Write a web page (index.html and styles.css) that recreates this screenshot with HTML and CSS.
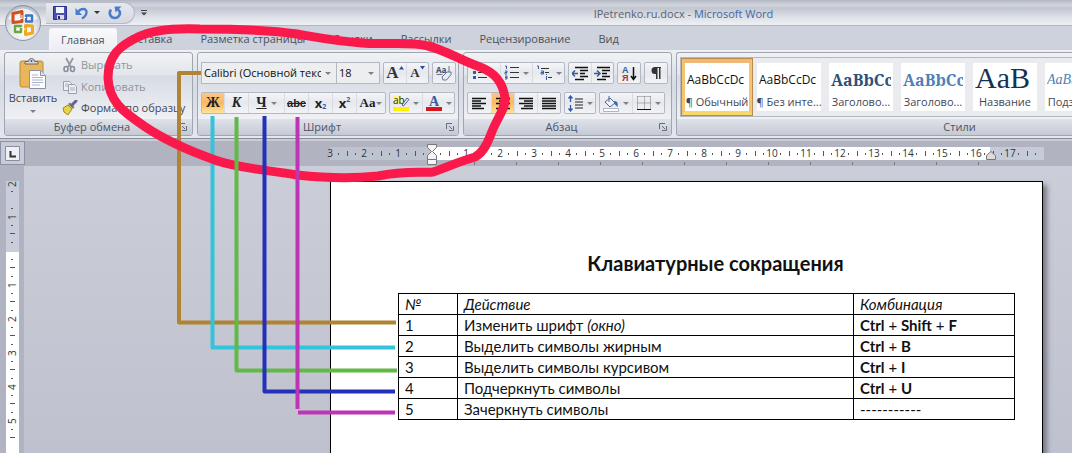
FILE: index.html
```
<!DOCTYPE html>
<html lang="ru">
<head>
<meta charset="utf-8">
<title>IPetrenko.ru.docx - Microsoft Word</title>
<link rel="stylesheet" href="styles.css">
</head>
<body>
<div class="app">
  <header class="titlebar">
    <button class="office" aria-label="Office">
      <svg width="38" height="38" viewBox="0 0 38 38">
        <defs><radialGradient id="orb" cx="50%" cy="75%" r="75%"><stop offset="0" stop-color="#fff"/><stop offset=".5" stop-color="#e3e6ec"/><stop offset="1" stop-color="#b4bac6"/></radialGradient></defs>
        <circle cx="19" cy="19" r="17.5" fill="url(#orb)" stroke="#8d939f"/>
        <path d="M4 15a16 16 0 0 1 30 0q-15 5-30 0z" fill="#fff" opacity=".7"/>
        <g fill="none" stroke-linejoin="round">
          <path d="M9 9.500l9-2v10l-9 1z" stroke="#d2501c" stroke-width="3"/>
          <path d="M22 11.500h6v6h-6z" stroke="#3b78c4" stroke-width="2.400"/>
          <path d="M11 22h6v6h-6z" stroke="#6aa83a" stroke-width="2.400"/>
          <path d="M21.500 21.500l7 .500v7l-7 1.500z" stroke="#f0a81c" stroke-width="3"/>
        </g>
        <path d="M18 11v3.500h-2M22 13.500h-2v2M16.500 23.500h2M21.500 25h-2" stroke="#fff" fill="none"/>
      </svg>
    </button>
    <div class="quick">
      <button aria-label="Сохранить"><svg width="14" height="14" viewBox="0 0 14 14"><path d="M.5.5h13v13h-13z" fill="#4a50b4" stroke="#2c3188"/><path d="M3 1h8v6H3z" fill="#f3f6ff"/><path d="M4 9h7v4.500H4z" fill="#d6daea"/><path d="M5 10h2v3H5z" fill="#23286e"/></svg></button>
      <button aria-label="Отменить"><svg width="14" height="14" viewBox="0 0 14 14"><path d="M3 6C6 2 12 2 11.500 6.500 11.300 9 9.500 11 7 12.500" fill="none" stroke="#4b7cc8" stroke-width="2.400"/><path d="M.5 2v7h6.500z" fill="#4b7cc8"/></svg><i class="arrow dark"></i></button>
      <button aria-label="Вернуть"><svg width="14" height="14" viewBox="0 0 14 14"><path d="M3 3.500C0 8 3 12 7 12s7-5 3-8.500" fill="none" stroke="#4b7cc8" stroke-width="2.600"/><path d="M6.500.500h7l-6 6z" fill="#4b7cc8"/></svg></button>
    </div>
    <button class="customize" aria-label="Настройка панели"><svg width="6" height="6" viewBox="0 0 6 6"><path d="M0 .5h6" stroke="#444"/><path d="M0 2.500h6l-3 3z" fill="#444"/></svg></button>
    <h1 class="title">IPetrenko.ru.docx - <span>Microsoft Word</span></h1>
  </header>

  <nav class="tabs">
    <button class="tab active">Главная</button>
    <button class="tab">Вставка</button>
    <button class="tab">Разметка страницы</button>
    <button class="tab">Ссылки</button>
    <button class="tab">Рассылки</button>
    <button class="tab">Рецензирование</button>
    <button class="tab">Вид</button>
  </nav>

  <div class="ribbon">
    <section class="group clipboard">
      <div class="body">
        <button class="paste">
          <svg width="28" height="32" viewBox="0 0 28 32"><rect x="1" y="3" width="23" height="26" rx="2" fill="#e9b659" stroke="#b98a3b"/><path d="M6 6V3.500h3.500a3 3 0 0 1 6 0H19V6z" fill="#d5d8de" stroke="#666b75"/><circle cx="12.500" cy="3" r="1" fill="#555"/><path d="M10.500 12.500h11l5 5V30.500h-16z" fill="#fdfdff" stroke="#8b93a5"/><path d="M21.500 12.500v5h5" fill="#dce3f0" stroke="#8b93a5"/><path d="M13 17h6M13 19.500h11M13 22h11M13 24.500h11M13 27h8" stroke="#aab4cb"/></svg>
          <span>Вставить</span><i class="arrow"></i>
        </button>
        <div class="commands">
          <button class="command muted"><svg width="16" height="16" viewBox="0 0 16 16"><path d="M4 1l5 9M11 1L6 10" stroke="#9398a2" stroke-width="1.800"/><g fill="none" stroke="#8a8f99" stroke-width="1.600"><ellipse cx="4" cy="12" rx="2" ry="2.500"/><ellipse cx="10.500" cy="12" rx="2" ry="2.500"/></g></svg>Вырезать</button>
          <button class="command muted"><svg width="16" height="16" viewBox="0 0 16 16"><g fill="#eef0f4" stroke="#9a9fab"><path d="M1.500 2.500h6l2 2v7h-8z"/><path d="M6.500 5.500h6l2 2v7h-8z"/></g><path d="M3 5h3M3 7h3M8 9h5M8 11h5" stroke="#a7acb7"/></svg>Копировать</button>
          <button class="command"><svg width="16" height="16" viewBox="0 0 16 16"><path d="M1 8l5-3 4 4-4 6-4-3z" fill="#e9d34b" stroke="#9c8a24"/><path d="M6 4l5 5 1.500-2L8 2.500z" fill="#6f8f45"/><path d="M10 5l4-4" stroke="#6c5d9a" stroke-width="3" stroke-linecap="round"/></svg>Формат по образцу</button>
        </div>
      </div>
      <footer><span>Буфер обмена</span><svg class="launcher" width="8" height="8" viewBox="0 0 8 8"><path d="M.5 6V.5H6M3 3l3 3M7.500 3v4.500H3" fill="none" stroke="#666d7a"/></svg></footer>
    </section>

    <section class="group font">
      <div class="body rows">
        <div class="row">
          <div class="combos">
            <label class="combo family"><select aria-label="Шрифт"><option>Calibri (Основной текст)</option></select></label>
            <label class="combo size"><select aria-label="Размер"><option>18</option></select></label>
          </div>
          <div class="set">
            <button class="w22 serif big" aria-label="Увеличить размер">A<svg class="sup" width="5" height="4" viewBox="0 0 5 4"><path d="M0 3.500h5L2.500 0z" fill="#2d4f94"/></svg></button>
            <button class="w22 serif small" aria-label="Уменьшить размер">A<svg class="sup" width="5" height="4" viewBox="0 0 5 4"><path d="M0 0h5L2.500 3.500z" fill="#2d4f94"/></svg></button>
          </div>
          <div class="set">
            <button class="w22" aria-label="Очистить формат"><svg width="18" height="17" viewBox="0 0 18 17"><text x="1" y="8" class="tiny">Aa</text><path d="M1.500 9.500h6M14 1v6" stroke="#68758f"/><path d="M7 12l5-5 4 0v2.500L11.500 15H8z" fill="#e7ecf6" stroke="#68758f"/></svg></button>
          </div>
        </div>
        <div class="row">
          <div class="set">
            <button class="w22 serif on">Ж</button>
            <button class="w24 serif"><em>К</em></button>
            <button class="w36 serif"><u>Ч</u><i class="arrow"></i></button>
            <button class="w24 strike"><s>abc</s></button>
            <button class="w24 script">x<sub>2</sub></button>
            <button class="w24 script">x<sup>2</sup></button>
            <button class="w29 serif case">Aa<i class="arrow"></i></button>
          </div>
          <div class="set">
            <button class="w33" aria-label="Цвет выделения"><svg width="17" height="17" viewBox="0 0 17 17"><path d="M0 12h16v4H0z" fill="#fff200"/><path d="M0 1h9v8H0z" fill="#fff68a"/><text x="0" y="9" class="mark">ab</text><path d="M9 10l5-7 2 1.500-5.500 6.500z" fill="#dfe8f6" stroke="#4a648f"/></svg><i class="arrow"></i></button>
            <button class="w33" aria-label="Цвет текста"><svg width="17" height="17" viewBox="0 0 17 17"><path d="M0 12h16v4H0z" fill="#d8141c"/><text x="3" y="11" class="letter">A</text></svg><i class="arrow"></i></button>
          </div>
        </div>
      </div>
      <footer><span>Шрифт</span><svg class="launcher" width="8" height="8" viewBox="0 0 8 8"><path d="M.5 6V.5H6M3 3l3 3M7.500 3v4.500H3" fill="none" stroke="#666d7a"/></svg></footer>
    </section>

    <section class="group paragraph">
      <div class="body rows">
        <div class="row">
          <div class="set">
            <button class="w33" aria-label="Маркеры"><svg width="16" height="16" viewBox="0 0 16 16"><path d="M1 1h3v3H1zM1 6h3v3H1zM1 11h3v3H1z" fill="#3b5a9a"/><path d="M6 2.500h9M6 7.500h9M6 12.500h9" stroke="#333"/></svg><i class="arrow"></i></button>
            <button class="w33" aria-label="Нумерация"><svg width="16" height="16" viewBox="0 0 16 16"><path d="M1 1h1.500v3M1 6h2v1.500H1V9h2M1 11h2v3H1M1 12.500h2" fill="none" stroke="#3b5a9a"/><path d="M6 2.500h9M6 7.500h9M6 12.500h9" stroke="#333"/></svg><i class="arrow"></i></button>
            <button class="w33" aria-label="Многоуровневый список"><svg width="17" height="16" viewBox="0 0 17 16"><path d="M1 1h1.500v3M5 6h2.500v3H5V7.500h2M10.500 11v4M10.500 9v1" fill="none" stroke="#3b5a9a"/><path d="M5 3.500h8M9 7.500h4M12 12.500h4" stroke="#333"/></svg><i class="arrow"></i></button>
          </div>
          <div class="set">
            <button class="w22" aria-label="Уменьшить отступ"><svg width="17" height="15" viewBox="0 0 17 15"><path d="M3 1.500h13M8 4.500h8M8 7.500h5M8 10.500h8M3 13.500h9" stroke="#111" stroke-width="1.500"/><path d="M0 7.500h6M3 4.500L0 7.500l3 3" fill="none" stroke="#3b5a9a" stroke-width="1.500"/></svg></button>
            <button class="w22" aria-label="Увеличить отступ"><svg width="17" height="15" viewBox="0 0 17 15"><path d="M3 1.500h13M8 4.500h8M8 7.500h5M8 10.500h8M3 13.500h9" stroke="#111" stroke-width="1.500"/><path d="M0 7.500h6M3 4.500l3 3-3 3" fill="none" stroke="#3b5a9a" stroke-width="1.500"/></svg></button>
          </div>
          <div class="set">
            <button class="w22" aria-label="Сортировка"><svg width="15" height="17" viewBox="0 0 15 17"><text x="0" y="8" class="sort-a">А</text><text x="0" y="16" class="sort-z">Я</text><path d="M11.500 2v12M9 11l2.500 3.500L14 11" fill="none" stroke="#111" stroke-width="1.500"/></svg></button>
          </div>
          <div class="set">
            <button class="w22" aria-label="Знаки абзаца"><svg width="12" height="14" viewBox="0 0 12 14"><path d="M11 1H5a3.500 3.500 0 0 0 0 7h1v5h1.500V2H9v11h1.500V2H11z" fill="#333"/></svg></button>
          </div>
        </div>
        <div class="row">
          <div class="set">
            <button class="w23" aria-label="По левому краю"><svg width="15" height="13" viewBox="0 0 15 13"><path d="M0 1.500h14M0 4h9M0 6.500h14M0 9h9M0 11.500h12" stroke="#111" stroke-width="1.300"/></svg></button>
            <button class="w23 on" aria-label="По центру"><svg width="15" height="13" viewBox="0 0 15 13"><path d="M0 1.500h14M3 4h8M0 6.500h14M3 9h8M0 11.500h14" stroke="#111" stroke-width="1.300"/></svg></button>
            <button class="w23" aria-label="По правому краю"><svg width="15" height="13" viewBox="0 0 15 13"><path d="M0 1.500h14M5 4h9M0 6.500h14M5 9h9M2 11.500h12" stroke="#111" stroke-width="1.300"/></svg></button>
            <button class="w23" aria-label="По ширине"><svg width="15" height="13" viewBox="0 0 15 13"><path d="M0 1.500h14M0 4h14M0 6.500h14M0 9h14M0 11.500h14" stroke="#111" stroke-width="1.300"/></svg></button>
          </div>
          <div class="set">
            <button class="w30" aria-label="Интервал"><svg width="16" height="17" viewBox="0 0 16 17"><path d="M2.500 1v6M.5 3.500l2-2.500 2 2.500M2.500 10v6M.5 13.500l2 2.500 2-2.500" fill="none" stroke="#2d5aa8" stroke-width="1.300"/><path d="M7 4h8M7 7h8M7 10h8M7 13h8" stroke="#222"/></svg><i class="arrow"></i></button>
          </div>
          <div class="set">
            <button class="w33" aria-label="Заливка"><svg width="17" height="17" viewBox="0 0 17 17"><path d="M2 7l5-4 5 5-5 4z" fill="#eef3fb" stroke="#4f6791"/><path d="M6 1v6" stroke="#4f6791"/><path d="M11 6c4 0 4 3 3.500 6l-3-3z" fill="#4067ad"/><path d="M.5 13.500h15v3H.5z" fill="#fff" stroke="#a6b4d0"/></svg><i class="arrow"></i></button>
            <button class="w33" aria-label="Границы"><svg width="15" height="15" viewBox="0 0 15 15"><path d="M.5.500v13M7.500.500v13M13.500.500v13M.5.500h13M.5 7h13" stroke="#777" stroke-dasharray="1 1" fill="none"/><path d="M0 13.500h14" stroke="#111"/></svg><i class="arrow"></i></button>
          </div>
        </div>
      </div>
      <footer><span>Абзац</span><svg class="launcher" width="8" height="8" viewBox="0 0 8 8"><path d="M.5 6V.5H6M3 3l3 3M7.500 3v4.500H3" fill="none" stroke="#666d7a"/></svg></footer>
    </section>

    <section class="group styles">
      <div class="body">
        <div class="gallery">
          <button class="style chosen"><span class="sample">AaBbCcDc</span><span class="name">¶ Обычный</span></button>
          <button class="style"><span class="sample">AaBbCcDc</span><span class="name">¶ Без инте...</span></button>
          <button class="style"><span class="sample heading one">AaBbCc</span><span class="name">Заголово...</span></button>
          <button class="style"><span class="sample heading two">AaBbCc</span><span class="name">Заголово...</span></button>
          <button class="style"><span class="sample main">AaB</span><span class="name">Название</span></button>
          <button class="style"><span class="sample subtitle">AaBbCc</span><span class="name">Подзагол...</span></button>
        </div>
      </div>
      <footer><span>Стили</span></footer>
    </section>
  </div>

  <div class="ruler">
    <button class="tabstop" aria-label="Табуляция"><svg width="15" height="15" viewBox="0 0 15 15"><path d="M.5.500h14v14H.5z" fill="#eef0f6" stroke="#8a8f9f"/><path d="M5.500 5v5.500H11" fill="none" stroke="#333" stroke-width="2"/></svg></button>
    <div class="scale">
      <span class="first">3</span><span>2</span><span>1</span><span class="origin"></span><span>1</span><span>2</span><span>3</span><span>4</span><span>5</span><span>6</span><span>7</span><span>8</span><span>9</span><span>10</span><span>11</span><span>12</span><span>13</span><span>14</span><span>15</span><span>16</span><span>17</span><span class="last"></span>
      <svg class="indent" width="10" height="22" viewBox="0 0 10 22"><path d="M.5.500h9v3l-4 4 4 4v4h-9v-4l4-4-4-4z" fill="#f4f4f6" stroke="#777"/><path d="M.5 15.500h9v5h-9z" fill="#f4f4f6" stroke="#777"/></svg>
      <svg class="indent right" width="10" height="10" viewBox="0 0 10 10"><path d="M5 .5l4.500 4v4h-9v-4z" fill="#ddd" stroke="#777"/></svg>
    </div>
  </div>

  <main class="workspace">
    <div class="vruler"><div class="vscale"><span class="top">2</span><span>1</span><span class="zero"></span><span>1</span><span>2</span><span>3</span><span>4</span><span>5</span></div></div>
    <article class="page">
      <h2>Клавиатурные сокращения</h2>
      <table>
        <thead><tr><th class="num">№</th><th>Действие</th><th class="keys">Комбинация</th></tr></thead>
        <tbody>
          <tr><td>1</td><td>Изменить шрифт <em>(окно)</em></td><td><b>Ctrl</b> + <b>Shift</b> + <b>F</b></td></tr>
          <tr><td>2</td><td>Выделить символы жирным</td><td><b>Ctrl</b> + <b>B</b></td></tr>
          <tr><td>3</td><td>Выделить символы курсивом</td><td><b>Ctrl</b> + <b>I</b></td></tr>
          <tr><td>4</td><td>Подчеркнуть символы</td><td><b>Ctrl</b> + <b>U</b></td></tr>
          <tr><td>5</td><td>Зачеркнуть символы</td><td>-----------</td></tr>
        </tbody>
      </table>
    </article>
  </main>

  <svg class="notes" width="1072" height="453" viewBox="0 0 1072 453" fill="none" stroke-width="4" stroke-linejoin="round">
    <path d="M201 73H179V322.500H396" stroke="#b08432"/>
    <path d="M212.500 116V347.500H395" stroke="#34c3dc"/>
    <path d="M200 29C172 28 152 30 138 37C119 46 108 56 108 78C109 101 122 111 144 126C160 137 187 150 215 160C240 169 270 170 297 175C325 178 350 179 378 176C403 171 420 173 433 172C448 167 460 161 475 157C484 152 488 142 491 134C497 118 506 108 505 98C503 83 496 73 480 67C460 60 445 50 428 46C410 41 385 45 362 43C335 41 315 37 297 34C270 30 240 29 200 29Z" stroke="#f91a4b" stroke-width="9"/>
    <path d="M236.500 117V370.500H397" stroke="#62b947"/>
    <path d="M264.500 116V391.500H395" stroke="#2330b8"/>
    <path d="M297.500 117V409M298 412.500H395" stroke="#bd35b4"/>
  </svg>
</div>
</body>
</html>
```
FILE: styles.css
```
* { box-sizing: border-box; }
html, body { height: 100%; margin: 0; }
body { font: 11px/16px "Open Sans", "Noto Sans", sans-serif; color: #3f4756; overflow: hidden; }
button, select { font: inherit; color: inherit; background: none; border: 0; padding: 0; margin: 0; }
button { display: flex; align-items: center; justify-content: center; }
svg { display: block; flex: none; }

.app { position: relative; display: flex; flex-direction: column; height: 100%; overflow: hidden; }
.notes { position: absolute; left: 0; top: 0; pointer-events: none; z-index: 3; }

.titlebar { position: relative; display: flex; flex: none; align-items: center; height: 26px; padding-left: 46px; border-bottom: 1px solid #b2b5be; background: linear-gradient(#b2b6c2, #d3d6de 5px, #c2c6d0 8px, #dfe2e9 18px, #eef0f4); }
.office { position: absolute; left: 4px; top: 4px; z-index: 2; }
.quick { display: flex; align-items: center; gap: 8px; height: 22px; padding: 0 12px 0 7px; border: 1px solid #b6bac4; border-left: 0; border-radius: 0 11px 11px 0; background: linear-gradient(#e6e8ee, #d6d9e2); }
.quick button { gap: 5px; }
.customize { margin-left: 6px; }
.title { flex: 1; margin: 0 0 0 148px; padding-top: 2px; text-align: center; font-size: 11px; font-weight: 400; color: #5b616d; }
.title span { color: #4367a0; }

.arrow { border: 3px solid transparent; border-top-color: #7b818d; border-bottom: 0; }
.arrow.dark { border-top-color: #333; }

.tabs { display: flex; flex: none; align-items: flex-end; height: 24px; padding-left: 49px; background: #ced2dc; }
.tab { height: 22px; padding: 0 14px; color: #4a515e; }
.tab.active { padding: 0 11px; border: 1px solid #f4f5f8; border-bottom: 0; border-radius: 3px 3px 0 0; background: linear-gradient(#f8f9fb, #eceef3); }

.ribbon { display: flex; flex: none; gap: 4px; height: 89px; padding: 2px 0 2px 4px; background: linear-gradient(#eef0f4, #d6dae3 40%, #e4e7ed); border-bottom: 1px solid #888d98; }
.group { display: flex; flex-direction: column; flex: none; border: 1px solid #a0a5b0; border-radius: 3px; background: linear-gradient(#f0f2f5, #e2e5eb 22px, #d7dbe4 23px, #f0f2f4 68px); overflow: hidden; }
.clipboard { width: 189px; }
.font { width: 262px; }
.paragraph { width: 209px; }
.styles { flex: 1; min-width: 0; border-right: 0; border-radius: 3px 0 0 3px; }
.group .body { flex: 1; min-height: 0; }
.group footer { display: flex; align-items: center; height: 16px; padding: 0 4px 0 0; background: linear-gradient(#dfe2e9, #c5cad5); color: #4c5361; }
.group footer span { flex: 1; text-align: center; }
.styles footer { padding-left: 174px; }

.clipboard .body { display: flex; padding: 1px 4px 0 2px; gap: 3px; }
.clipboard footer { padding-right: 5px; }
.paste { flex-direction: column; width: 52px; justify-content: flex-start; padding-top: 4px; }
.paste .arrow { margin-top: 4px; }
.commands { display: flex; flex-direction: column; }
.command { gap: 3px; height: 22px; justify-content: flex-start; white-space: nowrap; }
.muted { color: #8f939c; }

.rows { display: flex; flex-direction: column; gap: 8px; padding: 9px 3px 0; }
.row { display: flex; gap: 3px; height: 22px; }
.set { display: flex; border: 1px solid #b3b8c3; border-radius: 2px; background: linear-gradient(#f5f6f8, #e6e8ed 45%, #f2f3f5); }
.set button + button { border-left: 1px solid #d9dce2; }
.set button { gap: 3px; color: #222; }
.set .on { background: linear-gradient(#f8c88c, #fbb862 50%, #ffe39a); }
.w22 { width: 22px; }
.w23 { width: 23px; }
.w24 { width: 24px; }
.w29 { width: 29px; }
.w30 { width: 30px; }
.w33 { width: 32px; }
.w36 { width: 36px; }
.serif { font: bold 14px/20px "Liberation Serif", serif; }
.set .serif { gap: 4px; }
.set .big, .set .small { gap: 0; font-size: 17px; color: #333; }
.set .small { font-size: 13px; }
.sup { align-self: flex-start; margin-top: 3px; }
.set .case { gap: 1px; font-size: 13px; }
.strike { font: bold 11px/20px "Liberation Sans", sans-serif; }
.script { font: bold 13px/20px "Open Sans", sans-serif; }
.set .script { gap: 0; }
.script sub, .script sup { font-size: 7px; line-height: 8px; color: #2d5aa8; }
.script sub { align-self: flex-end; margin-bottom: 2px; }
.script sup { align-self: flex-start; margin-top: 3px; }
.tiny { font: bold 8px "Open Sans", sans-serif; fill: #3d4a63; }
.mark { font: 10px "Open Sans", sans-serif; fill: #222; }
.letter { font: bold 14px "Liberation Serif", serif; fill: #3b5a9a; }
.sort-a { font: bold 9px "Liberation Sans", sans-serif; fill: #3b5a9a; }
.sort-z { font: bold 9px "Liberation Sans", sans-serif; fill: #a63446; }

.combos { display: flex; }
.combo { position: relative; border: 1px solid #b3b8c3; background: #eceef0; }
.combo + .combo { border-left: 0; }
.combo::after { content: ""; position: absolute; right: 5px; top: 9px; border: 3px solid transparent; border-top-color: #7b818d; border-bottom: 0; }
.combo select { display: block; width: 100%; height: 20px; padding: 0 15px 0 2px; appearance: none; color: #111; overflow: hidden; text-overflow: clip; }
.family { width: 136px; }
.size { width: 43px; }

.styles .body { padding: 4px 0 4px 3px; }
.gallery { display: flex; height: 60px; border: 1px solid #b4b8c1; border-right: 0; background: #e9ebee; overflow: hidden; }
.style { flex: none; flex-direction: column; justify-content: space-between; width: 72px; height: 58px; padding: 0; border: 4px solid #e9ebee; border-width: 5px 4px; background: #fff; }
.chosen { border-color: #f0b878 #f4c570 #f8d868; outline: 1px solid #b88a4c; outline-offset: -1px; }
.sample { width: 60px; height: 30px; overflow: hidden; font: 12px/34px "Open Sans", sans-serif; color: #111; white-space: nowrap; text-align: left; }
.heading { font: bold 16px/34px "Noto Serif", "Liberation Serif", serif; color: #2e5078; }
.main { font: 30px/30px "Liberation Serif", serif; color: #17324f; }
.two { color: #4f81b5; }
.subtitle { font: italic 14px/34px "Liberation Serif", serif; color: #4f81b5; }
.name { white-space: nowrap; line-height: 18px; }

.ruler { display: flex; flex: none; height: 27px; border-top: 2px solid #c9ccd4; background: #b1b4c0; }
.tabstop { width: 25px; height: 24px; border: 1px solid #8d92a2; background: #c9ccd8; }
.scale { position: relative; display: flex; width: 731px; margin: 6px 0 0 288px; height: 13px; font: 10px/13px "Open Sans", sans-serif; color: #333; background: linear-gradient(90deg, transparent 17px, #bec3d0 17px 119px, #fff 119px 677px, #c6cbda 677px); }
.scale span { flex: none; width: 34px; text-align: center; background: linear-gradient(#555, #555) 0 50% / 1px 5px no-repeat, linear-gradient(#555, #555) 8px 50% / 1px 2px no-repeat, linear-gradient(#555, #555) 25px 50% / 1px 2px no-repeat; }
.scale .first { background: linear-gradient(#555, #555) 25px 50% / 1px 2px no-repeat; }
.scale .last { width: 17px; }
.scale::after { content: ""; position: absolute; left: 161px; top: 15px; width: 510px; height: 3px; background: repeating-linear-gradient(90deg, #777 0 1px, transparent 1px 42px); }
.indent { position: absolute; left: 114px; top: -3px; }
.indent.right { left: 673px; top: 4px; }

.workspace { display: flex; flex: 1; min-height: 0; background: linear-gradient(#cbcdd8, #bfc2ce); overflow: hidden; }
.vruler { flex: none; width: 24px; padding: 15px 5px 0 6px; background: #b0b3c1; }
.vscale { display: flex; flex-direction: column; height: 100%; width: 13px; font: 10px/13px "Open Sans", sans-serif; color: #333; background: linear-gradient(#c9cdd9 71px, #fff 71px); }
.vscale span { flex: none; height: 34px; writing-mode: vertical-rl; transform: rotate(180deg); text-align: center; background: linear-gradient(#555, #555) 50% 0 / 5px 1px no-repeat, linear-gradient(#555, #555) 50% 8px / 2px 1px no-repeat, linear-gradient(#555, #555) 50% 25px / 2px 1px no-repeat; }
.vscale .top { height: 19px; text-align: right; background: linear-gradient(#555, #555) 50% 8px / 2px 1px no-repeat; }

.page { flex: 1; margin: 15px 29px 0 306px; padding: 69px 27px 0 67px; border: 1px solid #000; border-bottom: 0; background: #fff; color: #111; box-shadow: 4px 4px 5px #777a86; font: 15px/20px Lato, "Open Sans", sans-serif; }
.page h2 { margin: 0 0 18px; padding-left: 18px; text-align: center; font-size: 20px; line-height: 24px; }
.page table { width: 100%; border-collapse: collapse; table-layout: fixed; }
.page th, .page td { height: 21px; padding: 0 6px; border: 1px solid #000; text-align: left; font-weight: 400; }
.page th { font-style: italic; }
.page .num { width: 59px; }
.page .keys { width: 161px; }
```
